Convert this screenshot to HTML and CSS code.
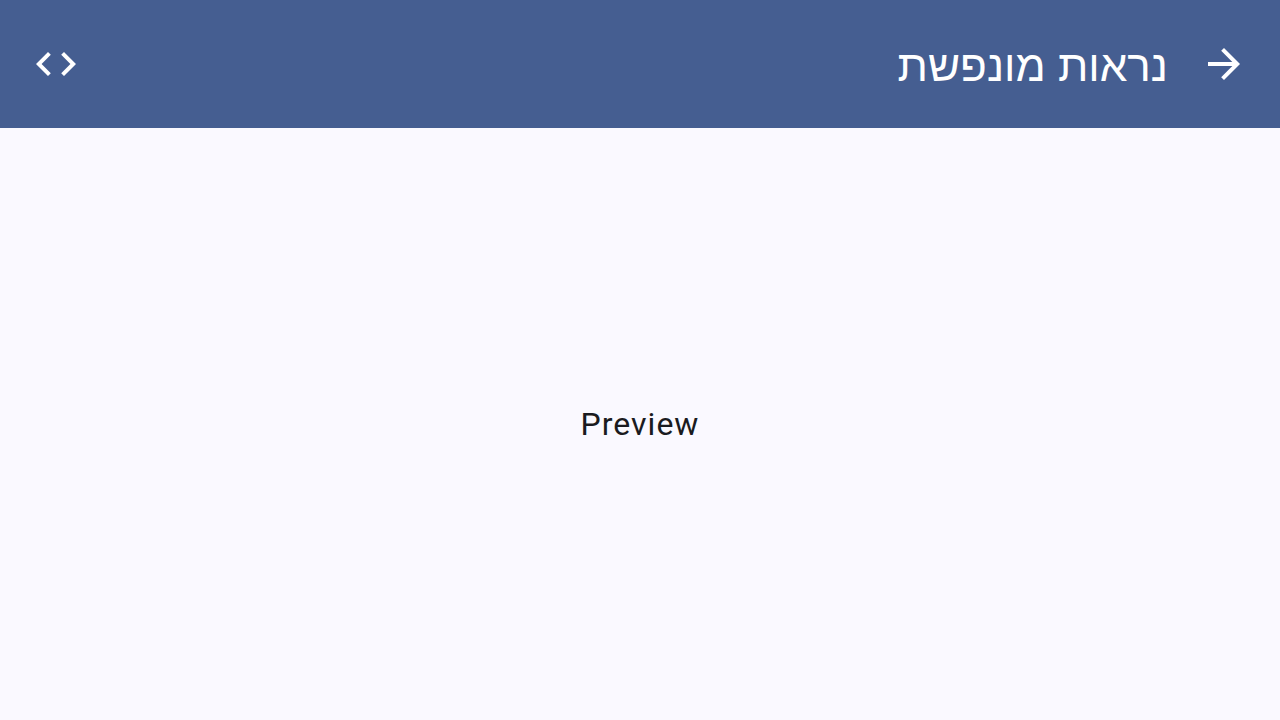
FILE: index.html
```html
<!DOCTYPE html>
<html lang="he" dir="rtl">
<head>
<meta charset="utf-8">
<meta name="viewport" content="width=device-width, initial-scale=1">
<title>נראות מונפשת</title>
<link rel="stylesheet" href="styles.css">
</head>
<body>
<header class="app-bar">
  <button class="icon-button" type="button" aria-label="חזרה">
    <svg class="icon" viewBox="0 0 24 24" aria-hidden="true"><path d="M12 4l-1.41 1.41L16.17 11H4v2h12.17l-5.58 5.59L12 20l8-8z"/></svg>
  </button>
  <h1 class="title">נראות מונפשת</h1>
  <button class="icon-button" type="button" aria-label="קוד">
    <svg class="icon" viewBox="0 0 24 24" aria-hidden="true"><path d="M9.4 16.6L4.8 12l4.6-4.6L8 6l-6 6 6 6 1.4-1.4zm5.2 0l4.6-4.6-4.6-4.6L16 6l6 6-6 6-1.4-1.4z"/></svg>
  </button>
</header>
<main class="content"><p class="preview" lang="en" dir="ltr">Preview</p></main>
</body>
</html>
```
FILE: styles.css
```css
* {
  box-sizing: border-box;
}

body {
  display: flex;
  flex-direction: column;
  min-height: 100vh;
  margin: 0;
  background: #faf9ff;
  color: #1a1b20;
  font-family: Roboto, "Open Sans", sans-serif;
}

.app-bar {
  display: flex;
  align-items: center;
  padding: 16px 8px;
  background: #455e91;
  color: #fff;
}

.icon-button {
  display: flex;
  flex: none;
  align-items: center;
  justify-content: center;
  width: 96px;
  height: 96px;
  padding: 0;
  border: 0;
  border-radius: 50%;
  background: none;
  color: inherit;
  cursor: pointer;
}

.icon {
  width: 48px;
  height: 48px;
  fill: currentColor;
}

.title {
  flex: 1;
  margin: 0;
  padding: 4px 8px 0;
  font-family: "Liberation Sans", Arial, sans-serif;
  font-size: 44px;
  font-weight: 400;
  line-height: 56px;
}

.content {
  display: flex;
  flex: 1;
  align-items: center;
  justify-content: center;
}

.preview {
  margin: 0;
  font-size: 32px;
  line-height: 48px;
  letter-spacing: 1px;
}
```
